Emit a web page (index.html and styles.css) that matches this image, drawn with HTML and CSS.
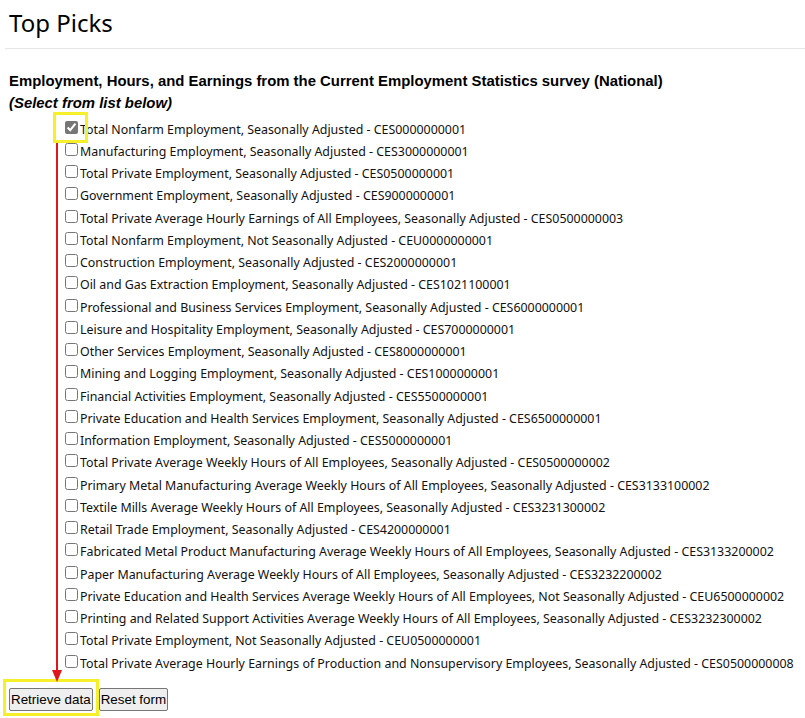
FILE: index.html
```html
<!DOCTYPE html>
<html>
<head>
<meta charset="utf-8">
<link rel="stylesheet" href="styles.css">
</head>
<body>
<div class="page">
  <h1 class="title">Top Picks</h1>
  <hr class="rule">
  <h2 class="survey">Employment, Hours, and Earnings from the Current Employment Statistics survey (National)</h2>
  <p class="hint">(Select from list below)</p>
  <ul class="picks">
    <li><input type="checkbox" checked><span>Total Nonfarm Employment, Seasonally Adjusted - CES0000000001</span></li>
    <li><input type="checkbox"><span>Manufacturing Employment, Seasonally Adjusted - CES3000000001</span></li>
    <li><input type="checkbox"><span>Total Private Employment, Seasonally Adjusted - CES0500000001</span></li>
    <li><input type="checkbox"><span>Government Employment, Seasonally Adjusted - CES9000000001</span></li>
    <li><input type="checkbox"><span>Total Private Average Hourly Earnings of All Employees, Seasonally Adjusted - CES0500000003</span></li>
    <li><input type="checkbox"><span>Total Nonfarm Employment, Not Seasonally Adjusted - CEU0000000001</span></li>
    <li><input type="checkbox"><span>Construction Employment, Seasonally Adjusted - CES2000000001</span></li>
    <li><input type="checkbox"><span>Oil and Gas Extraction Employment, Seasonally Adjusted - CES1021100001</span></li>
    <li><input type="checkbox"><span>Professional and Business Services Employment, Seasonally Adjusted - CES6000000001</span></li>
    <li><input type="checkbox"><span>Leisure and Hospitality Employment, Seasonally Adjusted - CES7000000001</span></li>
    <li><input type="checkbox"><span>Other Services Employment, Seasonally Adjusted - CES8000000001</span></li>
    <li><input type="checkbox"><span>Mining and Logging Employment, Seasonally Adjusted - CES1000000001</span></li>
    <li><input type="checkbox"><span>Financial Activities Employment, Seasonally Adjusted - CES5500000001</span></li>
    <li><input type="checkbox"><span>Private Education and Health Services Employment, Seasonally Adjusted - CES6500000001</span></li>
    <li><input type="checkbox"><span>Information Employment, Seasonally Adjusted - CES5000000001</span></li>
    <li><input type="checkbox"><span>Total Private Average Weekly Hours of All Employees, Seasonally Adjusted - CES0500000002</span></li>
    <li><input type="checkbox"><span>Primary Metal Manufacturing Average Weekly Hours of All Employees, Seasonally Adjusted - CES3133100002</span></li>
    <li><input type="checkbox"><span>Textile Mills Average Weekly Hours of All Employees, Seasonally Adjusted - CES3231300002</span></li>
    <li><input type="checkbox"><span>Retail Trade Employment, Seasonally Adjusted - CES4200000001</span></li>
    <li><input type="checkbox"><span>Fabricated Metal Product Manufacturing Average Weekly Hours of All Employees, Seasonally Adjusted - CES3133200002</span></li>
    <li><input type="checkbox"><span>Paper Manufacturing Average Weekly Hours of All Employees, Seasonally Adjusted - CES3232200002</span></li>
    <li><input type="checkbox"><span>Private Education and Health Services Average Weekly Hours of All Employees, Not Seasonally Adjusted - CEU6500000002</span></li>
    <li><input type="checkbox"><span>Printing and Related Support Activities Average Weekly Hours of All Employees, Seasonally Adjusted - CES3232300002</span></li>
    <li><input type="checkbox"><span>Total Private Employment, Not Seasonally Adjusted - CEU0500000001</span></li>
    <li><input type="checkbox"><span>Total Private Average Hourly Earnings of Production and Nonsupervisory Employees, Seasonally Adjusted - CES0500000008</span></li>
  </ul>
  <div class="actions">
    <button type="button" class="btn">Retrieve data</button><button type="button" class="btn">Reset form</button>
  </div>
</div>
<div class="mark mark-check"></div>
<div class="mark mark-btn"></div>
<svg class="arrow" width="20" height="545" viewBox="0 0 20 545">
  <line x1="10" y1="0" x2="10" y2="532" stroke="#e0161b" stroke-width="2"/>
  <polygon points="5,527 15,527 10,539" fill="#e0161b"/>
</svg>
</body>
</html>
```
FILE: styles.css
```css
html, body {
  margin: 0;
  padding: 0;
  background: #fff;
}
body {
  font-family: "Noto Sans", "Open Sans", sans-serif;
  color: #111;
}
.page {
  padding: 6px 0 0 9px;
}
.title {
  font-family: "Noto Sans", sans-serif;
  font-weight: 400;
  font-size: 24px;
  line-height: 34px;
  margin: 0;
  color: #000;
}
.rule {
  border: 0;
  border-top: 1px solid #e6e6e6;
  margin: 8px 0 0 -4px;
}
.survey {
  font-family: "Liberation Sans", Arial, sans-serif;
  font-weight: 700;
  font-size: 14.9px;
  line-height: 20px;
  margin: 22px 0 0 0;
  color: #000;
}
.hint {
  font-family: "Liberation Sans", Arial, sans-serif;
  font-weight: 700;
  font-style: italic;
  font-size: 14.9px;
  line-height: 20px;
  margin: 2px 0 0 0;
  color: #000;
}
.picks {
  list-style: none;
  margin: 5px 0 0 0;
  padding: 0 0 0 56px;
}
.picks li {
  display: flex;
  align-items: center;
  height: 22.25px;
  font-size: 12.4px;
  white-space: nowrap;
}
.picks input {
  margin: 0 2px 0 0;
  width: 13px;
  height: 13px;
  flex: none;
  position: relative;
  top: -2px;
}
.picks input:checked {
  accent-color: #767676;
}
.actions {
  margin-top: 14px;
  display: flex;
  gap: 6px;
}
.btn {
  font-family: "Liberation Sans", Arial, sans-serif;
  font-size: 13.4px;
  height: 23px;
  padding: 0 1px;
  border: 1px solid #767676;
  border-radius: 2px;
  background: #efefef;
  color: #000;
  margin: 0;
}
.mark {
  position: absolute;
  border: 3px solid #f5f02a;
  box-sizing: border-box;
}
.mark-check {
  left: 53px;
  top: 112px;
  width: 35px;
  height: 31px;
}
.mark-btn {
  left: 3px;
  top: 679px;
  width: 96px;
  height: 37px;
}
.arrow {
  position: absolute;
  left: 47px;
  top: 143px;
}
```
